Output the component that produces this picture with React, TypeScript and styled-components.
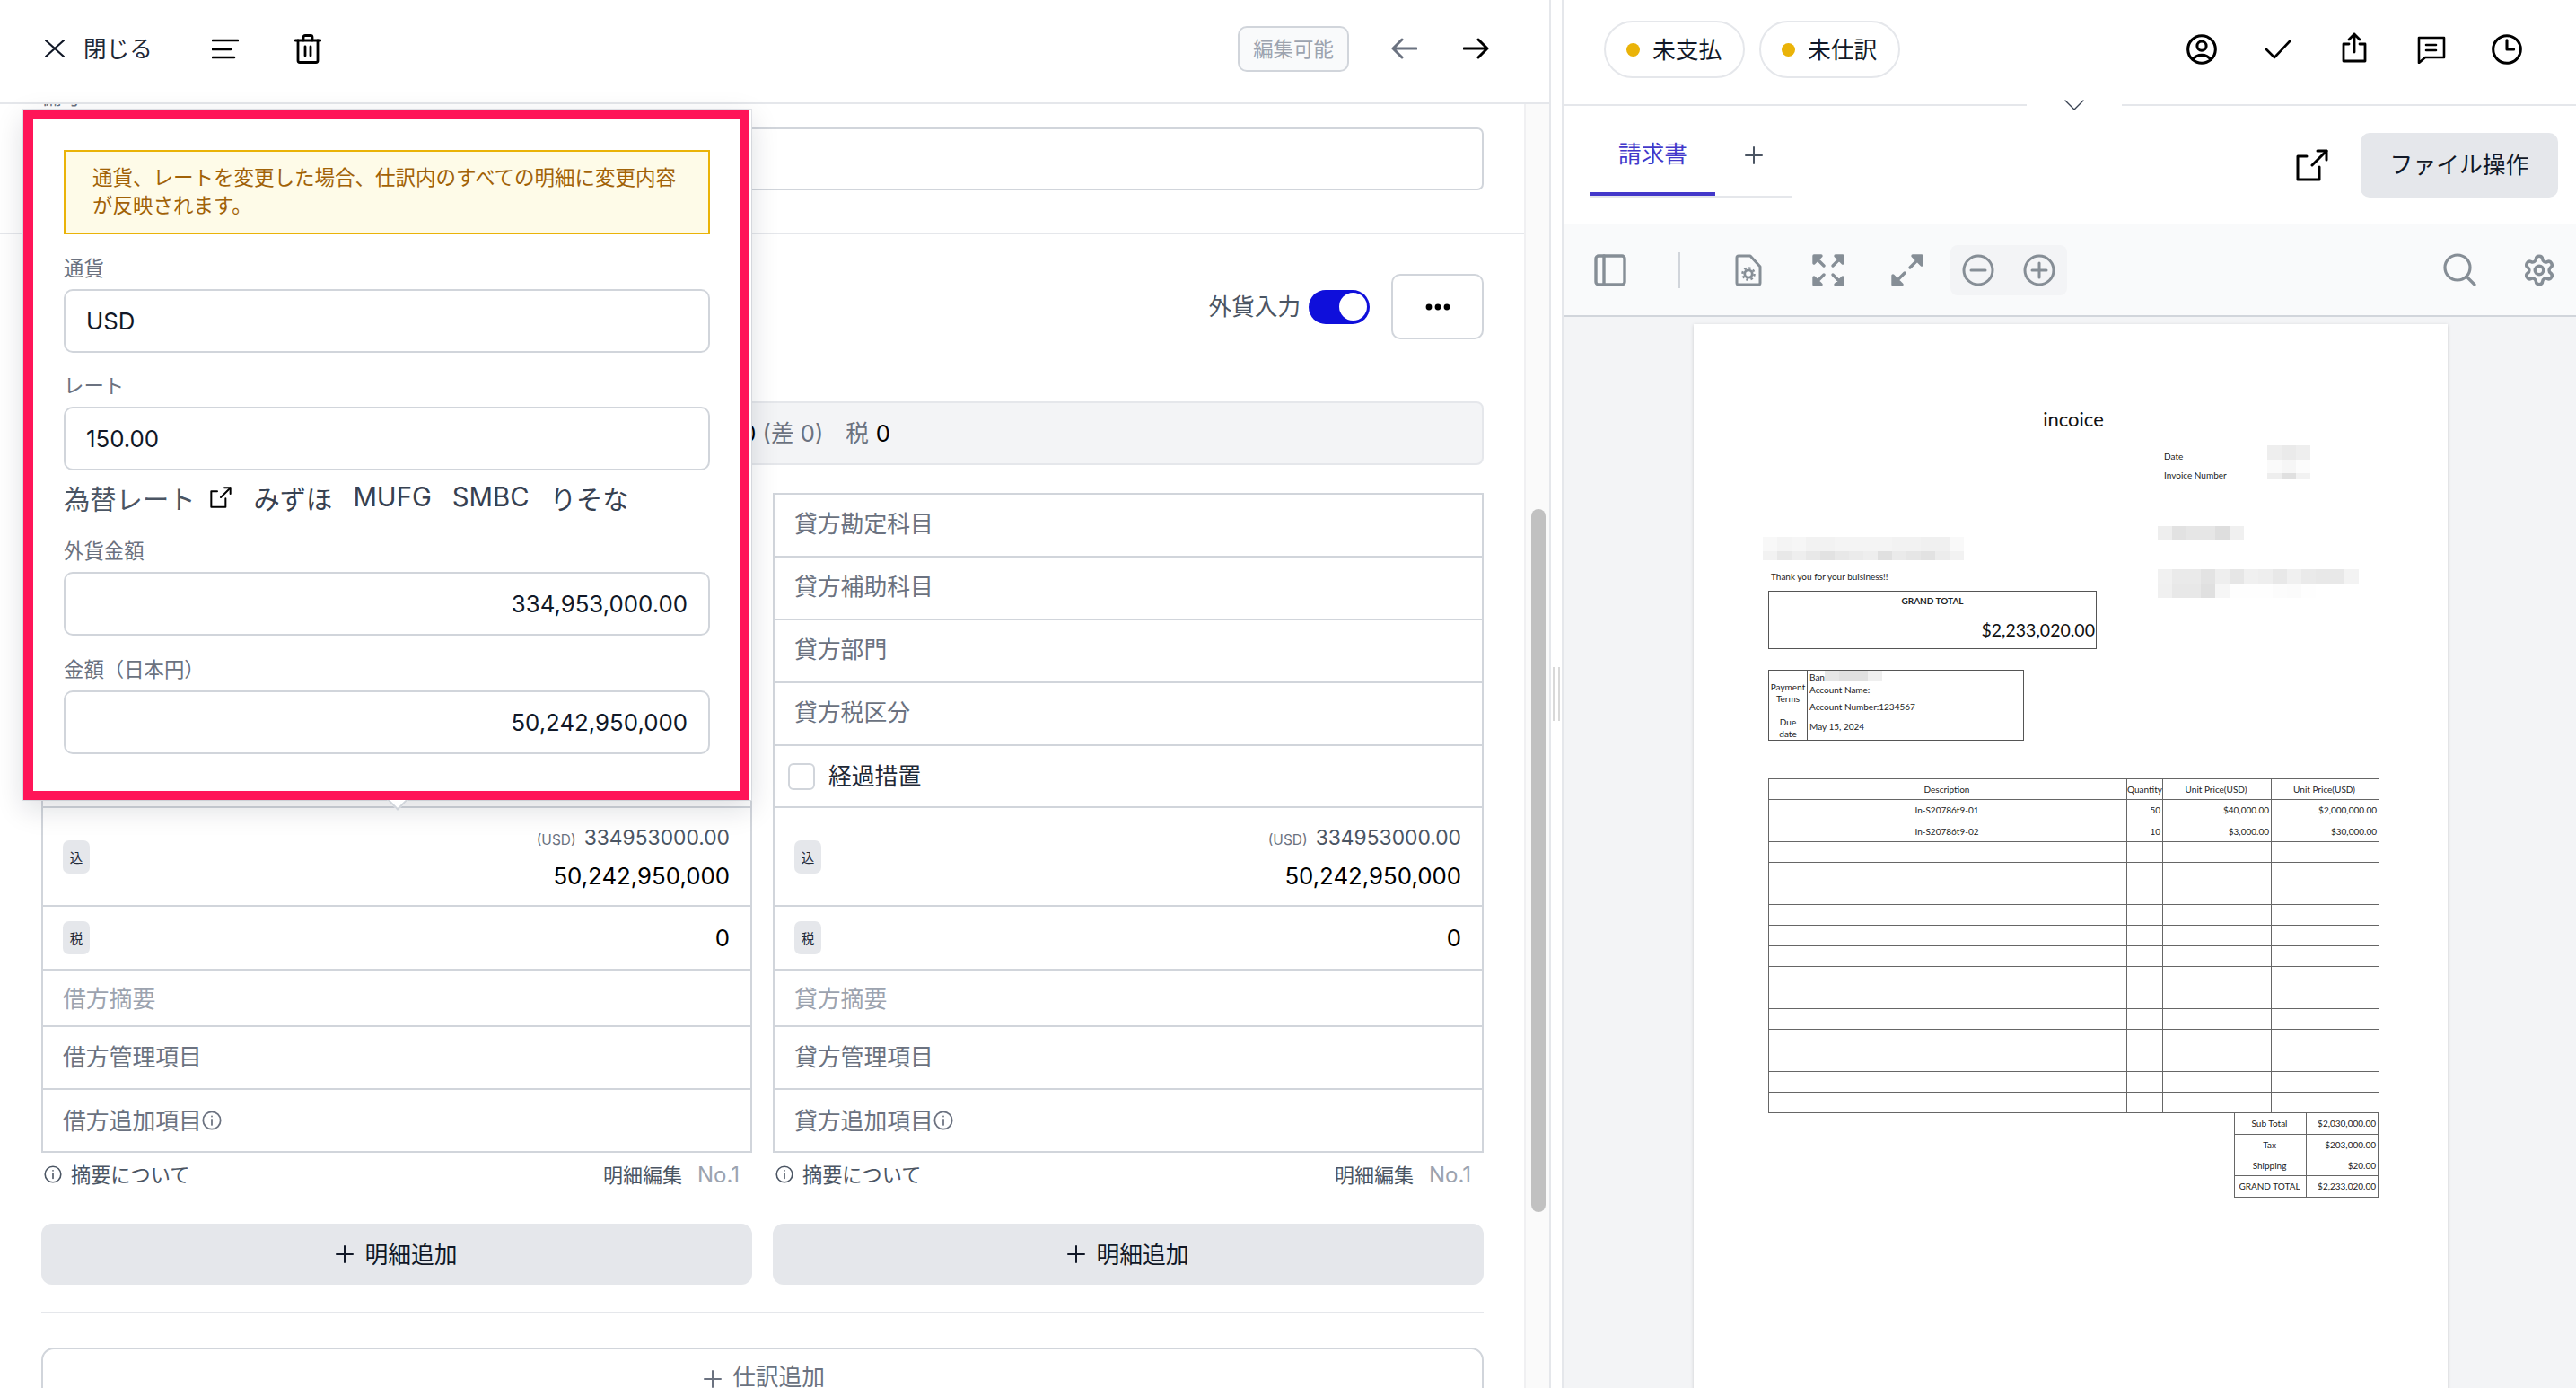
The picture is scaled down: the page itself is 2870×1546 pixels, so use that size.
import React from "react";
import styled, { createGlobalStyle } from "styled-components";
import { Settings } from "lucide-react";

const GlobalStyle = createGlobalStyle`
  html, body {
    margin: 0;
    padding: 0;
    background: #fff;
    overflow: hidden;
    font-family: Inter, "Noto Sans CJK JP", sans-serif;
    color: #111827;
  }
  * { box-sizing: border-box; }
`;

const Page = styled.div`
  display: flex;
  width: 2870px;
  height: 1546px;
  overflow: hidden;
`;

const Cjk = styled.span<{ $lift?: number }>`
  margin-bottom: ${(p) => p.$lift ?? 7}px;
`;

/* ---------- left panel ---------- */

const LeftPanel = styled.div`
  position: relative;
  display: flex;
  flex-direction: column;
  width: 1728px;
  height: 100%;
  border-right: 2px solid #e5e7eb;
`;

const Header = styled.header`
  display: flex;
  align-items: center;
  flex: none;
  height: 116px;
  padding: 0 67px 6px 50px;
  border-bottom: 2px solid #e5e7eb;
`;

const CloseText = styled.span`
  margin: 0 66px 4px 21px;
  font-size: 25.6px;
  color: #1f2937;
`;

const HeaderSpacer = styled.div`
  flex: 1;
`;

const EditBadge = styled.div`
  display: flex;
  align-items: center;
  justify-content: center;
  width: 124px;
  height: 51px;
  margin-right: 47px;
  background: #f9fafb;
  border: 2px solid #d1d5db;
  border-radius: 10px;
  font-size: 22.4px;
  color: #9ca3af;
`;

const Line = styled.svg<{ $color?: string; $sw?: number }>`
  flex: none;
  fill: none;
  stroke: ${(p) => p.$color ?? "#000"};
  stroke-width: ${(p) => p.$sw ?? 2.8};
  stroke-linecap: round;
  stroke-linejoin: round;
`;

const TrashIcon = styled(Line)`
  margin-left: 62px;
`;

const NextArrow = styled(Line)`
  margin-left: 51px;
`;

const ShareIcon = styled(Line)`
  margin-bottom: 5px;
`;

const Body = styled.div`
  display: flex;
  flex: 1;
  min-height: 0;
`;

const Scroller = styled.div`
  flex: 1;
  min-width: 0;
  overflow: hidden;
`;

const ScrollInner = styled.div`
  margin-top: -30px;
`;

const ScrollTrack = styled.div`
  flex: none;
  width: 28px;
  padding: 451px 4px 0 6px;
  background: #fafafa;
  border-left: 2px solid #f0f0f2;
`;

const ScrollThumb = styled.div`
  width: 16px;
  height: 783px;
  background: #c1c1c1;
  border-radius: 8px;
`;

const TopSection = styled.section`
  padding: 7px 45px 47px 46px;
  border-bottom: 2px solid #e5e7eb;
`;

const FieldLabel = styled.div`
  height: 30px;
  margin-bottom: 19px;
  font-size: 22.4px;
  line-height: 30px;
  color: #6b7280;
`;

const BlankInput = styled.div`
  height: 70px;
  border: 2px solid #d1d5db;
  border-radius: 7px;
`;

const JournalSection = styled.section`
  padding: 44px 45px 0 46px;
`;

const ToggleRow = styled.div`
  display: flex;
  align-items: center;
  justify-content: flex-end;
  height: 73px;
`;

const ToggleLabel = styled.span`
  margin-bottom: 4px;
  font-size: 25.6px;
  color: #4b5563;
`;

const Toggle = styled.div`
  display: flex;
  justify-content: flex-end;
  width: 68px;
  height: 38px;
  margin: 0 24px 0 9px;
  padding: 3.5px;
  background: #0f0fdb;
  border-radius: 19px;
`;

const ToggleKnob = styled.div`
  width: 31px;
  height: 31px;
  background: #fff;
  border-radius: 50%;
`;

const MoreButton = styled.div`
  display: flex;
  align-items: center;
  justify-content: center;
  width: 103px;
  height: 73px;
  border: 2px solid #d1d5db;
  border-radius: 10px;
`;

const SummaryBar = styled.div`
  display: flex;
  align-items: center;
  justify-content: flex-end;
  gap: 25px;
  height: 71px;
  margin: 69px 0 31px;
  padding: 0 659px 4px 0;
  background: #f3f4f6;
  border: 2px solid #e5e7eb;
  border-radius: 8px;
  font-size: 25.6px;
  white-space: nowrap;
  color: #6b7280;
`;

const SummaryValue = styled.b`
  margin-left: 8px;
  font-weight: 400;
  color: #000;
`;

const Columns = styled.div`
  display: grid;
  grid-template-columns: 792px 792px;
  gap: 23px;
`;

const LedgerTable = styled.div`
  border: 2px solid #d1d5db;
`;

const LedgerRow = styled.div<{ $h: number; $tone?: string }>`
  display: flex;
  align-items: center;
  justify-content: space-between;
  height: ${(p) => p.$h}px;
  padding: 0 23px 0 22px;
  border-bottom: 2px solid #d1d5db;
  font-size: 25.8px;
  color: ${(p) => p.$tone ?? "#6b7280"};

  &:last-child {
    border-bottom: 0;
  }
`;

const CheckBox = styled.span`
  width: 30px;
  height: 30px;
  margin: 0 15px 0 -7px;
  border: 2px solid #d1d5db;
  border-radius: 6px;
`;

const CheckLabel = styled.label`
  display: flex;
  align-items: center;
  color: #1f2937;
`;

const Tag = styled.span`
  display: flex;
  align-items: center;
  justify-content: center;
  width: 30px;
  height: 37px;
  background: #e5e7eb;
  border-radius: 7px;
  font-size: 14.6px;
  color: #1f2937;
`;

const AmountBlock = styled.div`
  text-align: right;
  line-height: 40px;
`;

const ForeignAmount = styled.div`
  font-size: 22.8px;
  color: #4b5563;
`;

const Currency = styled.span`
  margin-right: 9px;
  font-size: 15.5px;
  color: #6b7280;
`;

const YenAmount = styled.div`
  color: #000;
`;

const InlineHelp = styled.span`
  display: inline-flex;
  align-items: center;
`;

const ColumnFooter = styled.div`
  display: flex;
  align-items: center;
  justify-content: space-between;
  height: 52px;
  padding: 0 14px 4px 3px;
  font-size: 22px;
  color: #4b5563;
`;

const FooterNo = styled.span`
  margin-left: 17px;
  font-size: 24px;
  color: #9ca3af;
`;

const FooterNote = styled.span`
  margin: 0 0 2px 10px;
  font-size: 22.2px;
`;

const FooterEdit = styled.span`
  margin-bottom: 2px;
`;

const AddLineButton = styled.div`
  display: flex;
  align-items: center;
  justify-content: center;
  gap: 12px;
  height: 68px;
  margin-top: 27px;
  background: #e5e7eb;
  border-radius: 12px;
  font-size: 25.8px;
  color: #111827;
`;

const SectionRule = styled.hr`
  height: 2px;
  margin: 30px 0 38px;
  background: #e5e7eb;
  border: 0;
`;

const AddJournal = styled.div`
  display: flex;
  align-items: flex-start;
  justify-content: center;
  gap: 12px;
  height: 110px;
  padding: 15px 0 0 4px;
  border: 2px solid #d1d5db;
  border-radius: 14px;
  font-size: 25.8px;
  line-height: 32px;
  color: #6b7280;
`;

const PlusGlyph = styled(Line)`
  margin-top: 8px;
`;

/* ---------- popover ---------- */

const Popover = styled.div`
  position: absolute;
  top: 122px;
  left: 26px;
  width: 811px;
  height: 769px;
  background: #fff;
  box-shadow: 0 10px 30px rgba(17, 24, 39, 0.14), 0 0 0 1px #e5e7eb;
  z-index: 5;

  &::after {
    content: "";
    position: absolute;
    left: 408px;
    bottom: -8px;
    width: 16px;
    height: 16px;
    background: #fff;
    border-right: 2px solid #d1d5db;
    border-bottom: 2px solid #d1d5db;
    transform: rotate(45deg);
  }
`;

const PopoverFrame = styled.div`
  position: relative;
  z-index: 1;
  width: 808px;
  height: 100%;
  padding: 34px 33px 0 34px;
  background: #fff;
  border: solid #ff1558;
  border-width: 11px 10px 10px 11px;
`;

const Notice = styled.div`
  height: 94px;
  padding: 13px 30px;
  background: #fefbe8;
  border: 2px solid #eab308;
  font-size: 22.5px;
  line-height: 31px;
  color: #a16207;
`;

const PopField = styled.div<{ $top: number }>`
  margin-top: ${(p) => p.$top}px;
`;

const PopLabel = styled.div`
  height: 30px;
  margin-bottom: 8px;
  font-size: 22.4px;
  line-height: 30px;
  color: #6b7280;
`;

const PopInput = styled.div<{ $right?: boolean }>`
  display: flex;
  align-items: center;
  justify-content: ${(p) => (p.$right ? "flex-end" : "flex-start")};
  height: 71px;
  padding: 0 23px;
  border: 2px solid #d1d5db;
  border-radius: 10px;
  font-size: 25.8px;
  color: #111827;
`;

const RateLinks = styled.div`
  display: flex;
  align-items: center;
  height: 36px;
  margin-top: 13px;
  padding-bottom: 3px;
  font-size: 29.3px;
  color: #374151;
`;

const RateTitle = styled.span`
  margin-right: 17px;
  color: #4b5563;
`;

const RateBank = styled.span`
  margin-left: 23px;
`;

const FirstBank = styled(RateBank)`
  margin-left: 24px;
`;

/* ---------- gutter ---------- */

const Gutter = styled.div`
  display: flex;
  justify-content: center;
  gap: 4px;
  flex: none;
  width: 14px;
  padding-top: 743px;
  border-right: 2px solid #e5e7eb;
`;

const GripLine = styled.div`
  width: 2px;
  height: 60px;
  background: #d9d9d9;
`;

/* ---------- right panel ---------- */

const RightPanel = styled.div`
  display: flex;
  flex-direction: column;
  flex: 1;
  min-width: 0;
`;

const StatusBar = styled.div`
  display: flex;
  align-items: center;
  flex: none;
  height: 116px;
  padding: 0 59px 6px 45px;
`;

const StatusPill = styled.div`
  display: flex;
  align-items: center;
  gap: 14px;
  width: 157px;
  height: 64px;
  margin-right: 16px;
  padding-left: 23px;
  border: 2px solid #e5e7eb;
  border-radius: 32px;
  font-size: 25.8px;
  color: #111827;
`;

const StatusDot = styled.span`
  width: 15px;
  height: 15px;
  background: #eab308;
  border-radius: 50%;
`;

const StatusIcons = styled.div`
  display: flex;
  align-items: center;
  gap: 49px;
  margin-left: auto;
`;

const StatusIcon = styled.div`
  display: flex;
  align-items: center;
  justify-content: center;
  width: 36px;
  height: 36px;
`;

const CollapseRule = styled.div`
  display: flex;
  align-items: center;
  flex: none;
  height: 2px;
`;

const RuleLeft = styled.div`
  width: 516px;
  height: 2px;
  background: #e5e7eb;
`;

const RuleGap = styled.div`
  display: flex;
  justify-content: center;
  width: 106px;
`;

const RuleRight = styled.div`
  flex: 1;
  height: 2px;
  background: #e5e7eb;
`;

const TabBar = styled.div`
  display: flex;
  align-items: flex-start;
  flex: none;
  height: 132px;
  padding: 30px 20px 0 30px;
`;

const Tabs = styled.div`
  display: flex;
  width: 225px;
  height: 70px;
  margin-top: 2px;
  border-bottom: 2px solid #e5e7eb;
`;

const ActiveTab = styled.div`
  width: 139px;
  height: 68px;
  border-bottom: 4px solid #4338ca;
  font-size: 25.6px;
  line-height: 43px;
  text-align: center;
  color: #4338ca;
`;

const AddTab = styled.div`
  display: flex;
  justify-content: center;
  width: 86px;
  padding-top: 13px;
`;

const ExternalSlot = styled.div`
  display: flex;
  align-items: center;
  height: 72px;
  margin: 0 36px 0 auto;
`;

const FileButton = styled.div`
  display: flex;
  align-items: center;
  justify-content: center;
  width: 220px;
  height: 72px;
  background: #e5e7eb;
  border-radius: 10px;
  font-size: 25.8px;
  color: #111827;
`;

const PdfToolbar = styled.div`
  display: flex;
  align-items: center;
  flex: none;
  height: 103px;
  padding: 0 22px 0 34px;
  background: #f9fafb;
  border-bottom: 2px solid #d1d5db;
`;

const ToolSeparator = styled.div`
  width: 2px;
  height: 40px;
  margin: 0 59px 0 58px;
  background: #d1d5db;
`;

const ToolGroup = styled.div`
  display: flex;
  align-items: center;
  gap: 52px;
`;

const ZoomGroup = styled.div`
  display: flex;
  align-items: center;
  gap: 32px;
  height: 56px;
  margin-left: 30px;
  padding: 0 13px;
  background: #f3f4f6;
  border-radius: 8px;
`;

const ToolRight = styled.div`
  display: flex;
  align-items: center;
  gap: 51px;
  margin-left: auto;
`;

const Viewer = styled.div`
  display: flex;
  justify-content: center;
  flex: 1;
  min-height: 0;
  padding: 8px 0 0 2px;
  background: #f3f4f6;
`;

/* ---------- invoice ---------- */

const InvoiceSheet = styled.div`
  width: 840px;
  height: 1300px;
  padding: 90px 0 0 83px;
  background: #fff;
  box-shadow: 0 1px 4px rgba(0, 0, 0, 0.16);
  font-family: Lato, "Liberation Sans", sans-serif;
  font-size: 10px;
  color: #222;
`;

const InvoiceBody = styled.div`
  width: 680px;
`;

const InvoiceTitle = styled.div`
  font-size: 22px;
  line-height: 32px;
  text-align: center;
  color: #111;
`;

const InvoiceTop = styled.div`
  display: grid;
  grid-template-columns: 434px 246px;
`;

const InvoiceLeft = styled.div`
  padding-top: 115px;
`;

const InvoiceRight = styled.div`
  padding-top: 13px;
`;

const Mosaic = styled.div<{ $cols: number; $cw: number; $rows: string; $shift?: number; $top?: number }>`
  display: grid;
  grid-template-columns: repeat(${(p) => p.$cols}, ${(p) => p.$cw}px);
  grid-template-rows: ${(p) => p.$rows};
  width: max-content;
  margin-left: ${(p) => p.$shift ?? 0}px;
  margin-top: ${(p) => p.$top ?? 0}px;
`;

const MosaicCell = styled.div<{ $shade: string }>`
  background: #${(p) => p.$shade};
`;

const ThankYou = styled.div`
  height: 16px;
  margin: 10px 0 8px 3px;
  line-height: 16px;
`;

const GrandBox = styled.div`
  width: 366px;
  height: 65px;
  border: 1.5px solid #555;
`;

const GrandHead = styled.div`
  height: 22px;
  border-bottom: 1.5px solid #888;
  font-weight: 700;
  line-height: 20px;
  text-align: center;
`;

const GrandValue = styled.div`
  height: 41px;
  padding-right: 1px;
  font-size: 19.5px;
  line-height: 41px;
  text-align: right;
  color: #111;
`;

const TermsGrid = styled.div`
  display: grid;
  grid-template-columns: 43px 1fr;
  grid-template-rows: 51px 26px;
  width: 285px;
  margin-top: 23px;
  border: 1.5px solid #555;
`;

const TermsHead = styled.div<{ $last?: boolean }>`
  display: flex;
  align-items: center;
  justify-content: center;
  line-height: 13px;
  text-align: center;
  border-right: 1px solid #555;
  border-bottom: ${(p) => (p.$last ? "0" : "1.5px solid #777")};
`;

const TermsBody = styled.div<{ $last?: boolean }>`
  padding-left: 2px;
  line-height: 15px;
  border-bottom: ${(p) => (p.$last ? "0" : "1.5px solid #777")};
`;

const BankLine = styled.div`
  display: flex;
  height: 14px;
`;

const TermsGap = styled.div`
  height: 4px;
`;

const DateBlock = styled.div`
  display: flex;
`;

const DateLabels = styled.div`
  width: 122px;
  height: 38px;
  padding: 2px 0 0 7px;
  line-height: 21px;
`;

const InvoiceTable = styled.table`
  width: 680px;
  margin-top: 42px;
  border-collapse: collapse;
  table-layout: fixed;
`;

const InvoiceCell = styled.td<{ $align?: string }>`
  height: 23.25px;
  padding: 0 2px 0 0;
  border: 1.2px solid #666;
  line-height: 10px;
  text-align: ${(p) => p.$align ?? "right"};
`;

const TotalsTable = styled.table`
  width: 161px;
  margin-left: 519px;
  border-collapse: collapse;
  table-layout: fixed;
`;

const TotalsCell = styled.td<{ $align?: string }>`
  height: 23.25px;
  padding: 0 2px 0 0;
  border: 1.2px solid #666;
  border-top: 0;
  line-height: 10px;
  text-align: ${(p) => p.$align ?? "right"};
`;

/* ---------- icons ---------- */

const InfoIcon = ({ size, color }: { size: number; color: string }) => (
  <Line width={size} height={size} viewBox="0 0 20 20" $color={color} $sw={1.6}>
    <circle cx="10" cy="10" r="8.8" />
    <path d="M10 9v5.5" />
    <path d="M10 5.8v.2" />
  </Line>
);

const ExternalIcon = ({ size }: { size: number }) => (
  <Line width={size} height={size} viewBox="0 0 36 36" $sw={3}>
    <path d="M12 8H2v26h24V20" />
    <path d="M18 18 34 2" />
    <path d="M24 2h10v10" />
  </Line>
);

const PlusIcon = ({ color }: { color: string }) => (
  <Line width="20" height="20" viewBox="0 0 20 20" $sw={2} $color={color}>
    <path d="M10 1v18M1 10h18" />
  </Line>
);

const tool = "#868e96";

const invoiceRows = [
  ["In-S20786t9-01", "50", "$40,000.00", "$2,000,000.00"],
  ["In-S20786t9-02", "10", "$3,000.00", "$30,000.00"],
  ...Array.from({ length: 13 }, () => ["", "", "", ""]),
];

const totals = [
  ["Sub Total", "$2,030,000.00"],
  ["Tax", "$203,000.00"],
  ["Shipping", "$20.00"],
  ["GRAND TOTAL", "$2,233,020.00"],
];

const cells = (shades: string[]) =>
  shades.map((s, i) => <MosaicCell key={i} $shade={s} />);

// the top rows of the debit column sit under the popover, so they carry no text here
function LedgerColumn({ side, covered }: { side: string; covered?: boolean }) {
  return (
    <div>
      <LedgerTable>
        <LedgerRow $h={70}>{!covered && <Cjk>{side}勘定科目</Cjk>}</LedgerRow>
        <LedgerRow $h={70}>{!covered && <Cjk>{side}補助科目</Cjk>}</LedgerRow>
        <LedgerRow $h={70}>{!covered && <Cjk>{side}部門</Cjk>}</LedgerRow>
        <LedgerRow $h={70}>{!covered && <Cjk>{side}税区分</Cjk>}</LedgerRow>
        <LedgerRow $h={69}>
          {!covered && (
            <CheckLabel>
              <CheckBox />
              <Cjk $lift={4}>経過措置</Cjk>
            </CheckLabel>
          )}
        </LedgerRow>
        <LedgerRow $h={110}>
          <Tag>込</Tag>
          <AmountBlock>
            <ForeignAmount>
              <Currency>(USD)</Currency>334953000.00
            </ForeignAmount>
            <YenAmount>50,242,950,000</YenAmount>
          </AmountBlock>
        </LedgerRow>
        <LedgerRow $h={71}>
          <Tag>税</Tag>
          <YenAmount>0</YenAmount>
        </LedgerRow>
        <LedgerRow $h={63} $tone="#9ca3af">
          <Cjk $lift={3}>{side}摘要</Cjk>
        </LedgerRow>
        <LedgerRow $h={70}>
          <Cjk $lift={5}>{side}管理項目</Cjk>
        </LedgerRow>
        <LedgerRow $h={68}>
          <InlineHelp>
            <Cjk $lift={3}>{side}追加項目</Cjk>
            <InfoIcon size={22} color="#6b7280" />
          </InlineHelp>
        </LedgerRow>
      </LedgerTable>
      <ColumnFooter>
        <InlineHelp>
          <InfoIcon size={20} color="#4b5563" />
          <FooterNote>摘要について</FooterNote>
        </InlineHelp>
        <FooterEdit>
          明細編集<FooterNo>No.1</FooterNo>
        </FooterEdit>
      </ColumnFooter>
      <AddLineButton>
        <PlusIcon color="#111827" />
        <Cjk $lift={4}>明細追加</Cjk>
      </AddLineButton>
    </div>
  );
}

export default function App() {
  return (
    <Page>
      <GlobalStyle />
      <LeftPanel>
        <Header>
          <Line width="22" height="20" viewBox="0 0 22 20" $sw={2.2} $color="#111827">
            <path d="M1 1 21 19M21 1 1 19" />
          </Line>
          <CloseText>閉じる</CloseText>
          <Line width="30" height="23" viewBox="0 0 30 23" $sw={2.6}>
            <path d="M1 2h28M1 12h20M1 21h24" />
          </Line>
          <TrashIcon width="30" height="33" viewBox="0 0 30 33" $sw={2.8}>
            <path d="M1 7h28" />
            <path d="M10 7V3.5A2 2 0 0 1 12 1.5h6a2 2 0 0 1 2 2V7" />
            <path d="M4 7v22.5a2 2 0 0 0 2 2h18a2 2 0 0 0 2-2V7" />
            <path d="M12 14v10M18 14v10" />
          </TrashIcon>
          <HeaderSpacer />
          <EditBadge>
            <Cjk $lift={3}>編集可能</Cjk>
          </EditBadge>
          <Line width="29" height="24" viewBox="0 0 29 24" $sw={3} $color="#6b7280">
            <path d="M28 12H2M12 2 2 12l10 10" />
          </Line>
          <NextArrow width="29" height="24" viewBox="0 0 29 24" $sw={3}>
            <path d="M1 12h26M17 2l10 10-10 10" />
          </NextArrow>
        </Header>
        <Body>
          <Scroller>
            <ScrollInner>
              <TopSection>
                <FieldLabel>備考</FieldLabel>
                <BlankInput />
              </TopSection>
              <JournalSection>
                <ToggleRow>
                  <ToggleLabel>外貨入力</ToggleLabel>
                  <Toggle>
                    <ToggleKnob />
                  </Toggle>
                  <MoreButton>
                    <svg width="28" height="8" viewBox="0 0 28 8">
                      <circle cx="4" cy="4" r="3.4" />
                      <circle cx="14" cy="4" r="3.4" />
                      <circle cx="24" cy="4" r="3.4" />
                    </svg>
                  </MoreButton>
                </ToggleRow>
                <SummaryBar>
                  <span>
                    <SummaryValue>0</SummaryValue> (差 0)
                  </span>
                  <span>
                    税<SummaryValue>0</SummaryValue>
                  </span>
                </SummaryBar>
                <Columns>
                  <LedgerColumn side="借方" covered />
                  <LedgerColumn side="貸方" />
                </Columns>
                <SectionRule />
                <AddJournal>
                  <PlusGlyph width="20" height="20" viewBox="0 0 20 20" $sw={2} $color="#6b7280">
                    <path d="M10 1v18M1 10h18" />
                  </PlusGlyph>
                  仕訳追加
                </AddJournal>
              </JournalSection>
            </ScrollInner>
          </Scroller>
          <ScrollTrack>
            <ScrollThumb />
          </ScrollTrack>
        </Body>
        <Popover>
          <PopoverFrame>
            <Notice>通貨、レートを変更した場合、仕訳内のすべての明細に変更内容が反映されます。</Notice>
            <PopField $top={23}>
              <PopLabel>通貨</PopLabel>
              <PopInput>USD</PopInput>
            </PopField>
            <PopField $top={22}>
              <PopLabel>レート</PopLabel>
              <PopInput>150.00</PopInput>
            </PopField>
            <RateLinks>
              <RateTitle>為替レート</RateTitle>
              <ExternalIcon size={24} />
              <FirstBank>みずほ</FirstBank>
              <RateBank>MUFG</RateBank>
              <RateBank>SMBC</RateBank>
              <RateBank>りそな</RateBank>
            </RateLinks>
            <PopField $top={26}>
              <PopLabel>外貨金額</PopLabel>
              <PopInput $right>334,953,000.00</PopInput>
            </PopField>
            <PopField $top={23}>
              <PopLabel>金額（日本円）</PopLabel>
              <PopInput $right>50,242,950,000</PopInput>
            </PopField>
          </PopoverFrame>
        </Popover>
      </LeftPanel>

      <Gutter>
        <GripLine />
        <GripLine />
      </Gutter>

      <RightPanel>
        <StatusBar>
          <StatusPill>
            <StatusDot />
            <Cjk $lift={4}>未支払</Cjk>
          </StatusPill>
          <StatusPill>
            <StatusDot />
            <Cjk $lift={4}>未仕訳</Cjk>
          </StatusPill>
          <StatusIcons>
            <StatusIcon>
              <Line width="34" height="34" viewBox="2 2 20 20" $sw={1.8}>
                <path d="M17.982 18.725A7.488 7.488 0 0 0 12 15.75a7.488 7.488 0 0 0-5.982 2.975m11.963 0a9 9 0 1 0-11.963 0m11.963 0A8.966 8.966 0 0 1 12 21a8.966 8.966 0 0 1-5.982-2.275M15 9.75a3 3 0 1 1-6 0 3 3 0 0 1 6 0Z" />
              </Line>
            </StatusIcon>
            <StatusIcon>
              <Line width="28" height="21" viewBox="0 0 28 21" $sw={2.6}>
                <path d="M1 10l9 9L27 1" />
              </Line>
            </StatusIcon>
            <StatusIcon>
              <ShareIcon width="28" height="34" viewBox="0 0 28 34" $sw={2.8}>
                <path d="M14 22V2M8 8l6-6 6 6" />
                <path d="M8 13H2v19h24V13h-6" />
              </ShareIcon>
            </StatusIcon>
            <StatusIcon>
              <Line width="33" height="31" viewBox="0 0 33 31" $sw={2.6}>
                <path d="M3 2h28v22H10l-7 6V2Z" />
                <path d="M11 10h11M11 16h11" />
              </Line>
            </StatusIcon>
            <StatusIcon>
              <Line width="34" height="34" viewBox="2 2 20 20" $sw={1.8}>
                <path d="M12 6v6h4.5m4.5 0a9 9 0 1 1-18 0 9 9 0 0 1 18 0Z" />
              </Line>
            </StatusIcon>
          </StatusIcons>
        </StatusBar>
        <CollapseRule>
          <RuleLeft />
          <RuleGap>
            <Line width="22" height="12" viewBox="0 0 22 12" $sw={1.4} $color="#374151">
              <path d="M1 1l10 10L21 1" />
            </Line>
          </RuleGap>
          <RuleRight />
        </CollapseRule>
        <TabBar>
          <Tabs>
            <ActiveTab>請求書</ActiveTab>
            <AddTab>
              <PlusIcon color="#4b5563" />
            </AddTab>
          </Tabs>
          <ExternalSlot>
            <ExternalIcon size={36} />
          </ExternalSlot>
          <FileButton>
            <Cjk $lift={5}>ファイル操作</Cjk>
          </FileButton>
        </TabBar>
        <PdfToolbar>
          <Line width="36" height="36" viewBox="0 0 36 36" $color={tool} $sw={3.4}>
            <rect x="2" y="2" width="32" height="32" rx="3" />
            <path d="M11 2v32" />
          </Line>
          <ToolSeparator />
          <ToolGroup>
            <Line width="36" height="36" viewBox="0 0 36 36" $color={tool} $sw={3}>
              <path d="M6 2h13l11 12v18a2 2 0 0 1-2 2H6a2 2 0 0 1-2-2V4a2 2 0 0 1 2-2Z" />
              <circle cx="17" cy="22" r="4.2" strokeWidth="2.8" />
              <circle cx="17" cy="22" r="6.6" strokeWidth="2.4" strokeDasharray="2.6 2.58" strokeLinecap="butt" />
            </Line>
            <Line width="36" height="36" viewBox="0 0 36 36" $color={tool} $sw={3.4}>
              <path d="M2 2h8L2 10ZM5 5l8 8" fill={tool} />
              <path d="M34 2h-8l8 8ZM31 5l-8 8" fill={tool} />
              <path d="M2 34h8l-8-8ZM5 31l8-8" fill={tool} />
              <path d="M34 34h-8l8-8ZM31 31l-8-8" fill={tool} />
            </Line>
            <Line width="36" height="36" viewBox="0 0 36 36" $color={tool} $sw={3.4}>
              <path d="M34 2H24l10 10ZM30 6l-9 9" fill={tool} />
              <path d="M2 34h10L2 24ZM6 30l9-9" fill={tool} />
            </Line>
          </ToolGroup>
          <ZoomGroup>
            <Line width="36" height="36" viewBox="0 0 36 36" $color={tool} $sw={3}>
              <circle cx="18" cy="18" r="16" />
              <path d="M10 18h16" />
            </Line>
            <Line width="36" height="36" viewBox="0 0 36 36" $color={tool} $sw={3}>
              <circle cx="18" cy="18" r="16" />
              <path d="M10 18h16M18 10v16" />
            </Line>
          </ZoomGroup>
          <ToolRight>
            <Line width="37" height="37" viewBox="0 0 37 37" $color={tool} $sw={3.2}>
              <circle cx="16" cy="16" r="14" />
              <path d="M26 26l9 9" />
            </Line>
            <Settings size={38} color={tool} strokeWidth={2.2} />
          </ToolRight>
        </PdfToolbar>
        <Viewer>
          <InvoiceSheet>
            <InvoiceBody>
              <InvoiceTitle>incoice</InvoiceTitle>
              <InvoiceTop>
                <InvoiceLeft>
                  <Mosaic $cols={14} $cw={16} $rows="16px 10px" $shift={-6}>
                    {cells([
                      "f8f8f8", "f4f4f4", "f6f6f6", "f2f2f2", "f2f2f2", "f4f4f4", "f4f4f4",
                      "f4f4f4", "f4f4f4", "f2f2f2", "f2f2f2", "f0f0f0", "f0f0f0", "f9f9f9",
                      "f2f2f2", "e8e8e8", "eeeeee", "e8e8e8", "e2e2e2", "e8e8e8", "ebebeb",
                      "eeeeee", "e0e0e0", "eaeaea", "e6e6e6", "e2e2e2", "ececec", "f2f2f2",
                    ])}
                  </Mosaic>
                  <ThankYou>Thank you for your buisiness!!</ThankYou>
                  <GrandBox>
                    <GrandHead>GRAND TOTAL</GrandHead>
                    <GrandValue>$2,233,020.00</GrandValue>
                  </GrandBox>
                  <TermsGrid>
                    <TermsHead>
                      Payment
                      <br />
                      Terms
                    </TermsHead>
                    <TermsBody>
                      <BankLine>
                        Ban
                        <Mosaic $cols={4} $cw={16} $rows="12px">
                          {cells(["e6e6e6", "e0e0e0", "e0e0e0", "efefef"])}
                        </Mosaic>
                      </BankLine>
                      Account Name:
                      <TermsGap />
                      Account Number:1234567
                    </TermsBody>
                    <TermsHead $last>
                      Due
                      <br />
                      date
                    </TermsHead>
                    <TermsBody $last>
                      <TermsGap />
                      May 15, 2024
                    </TermsBody>
                  </TermsGrid>
                </InvoiceLeft>
                <InvoiceRight>
                  <DateBlock>
                    <DateLabels>
                      Date
                      <br />
                      Invoice Number
                    </DateLabels>
                    <Mosaic $cols={3} $cw={16} $rows="16px 15px 7px">
                      {cells([
                        "eeeeee", "eaeaea", "eeeeee",
                        "fafafa", "f6f6f6", "fcfcfc",
                        "eeeeee", "e0e0e0", "f2f2f2",
                      ])}
                    </Mosaic>
                  </DateBlock>
                  <Mosaic $cols={6} $cw={16} $rows="16px" $top={52}>
                    {cells(["eeeeee", "e2e2e2", "e6e6e6", "e6e6e6", "dedede", "f0f0f0"])}
                  </Mosaic>
                  <Mosaic $cols={14} $cw={16} $rows="16px 16px" $top={32}>
                    {cells([
                      "f1f1f1", "eaeaea", "eaeaea", "e3e3e3", "eeeeee", "e6e6e6", "f0f0f0",
                      "eeeeee", "e8e8e8", "f0f0f0", "eaeaea", "e8e8e8", "e8e8e8", "f3f3f3",
                      "f0f0f0", "e8e8e8", "e8e8e8", "e0e0e0", "f6f6f6", "fefefe", "fefefe",
                      "fefefe", "fcfcfc", "fbfbfb", "fefefe", "ffffff", "ffffff", "ffffff",
                    ])}
                  </Mosaic>
                </InvoiceRight>
              </InvoiceTop>
              <InvoiceTable>
                <colgroup>
                  <col width="399" />
                  <col width="40" />
                  <col width="121" />
                  <col width="120" />
                </colgroup>
                <tbody>
                  <tr>
                    <InvoiceCell $align="center">Description</InvoiceCell>
                    <InvoiceCell $align="center">Quantity</InvoiceCell>
                    <InvoiceCell $align="center">Unit Price(USD)</InvoiceCell>
                    <InvoiceCell $align="center">Unit Price(USD)</InvoiceCell>
                  </tr>
                  {invoiceRows.map((row, i) => (
                    <tr key={i}>
                      <InvoiceCell $align="center">{row[0]}</InvoiceCell>
                      <InvoiceCell>{row[1]}</InvoiceCell>
                      <InvoiceCell>{row[2]}</InvoiceCell>
                      <InvoiceCell>{row[3]}</InvoiceCell>
                    </tr>
                  ))}
                </tbody>
              </InvoiceTable>
              <TotalsTable>
                <tbody>
                  {totals.map(([label, value]) => (
                    <tr key={label}>
                      <TotalsCell $align="center">{label}</TotalsCell>
                      <TotalsCell>{value}</TotalsCell>
                    </tr>
                  ))}
                </tbody>
              </TotalsTable>
            </InvoiceBody>
          </InvoiceSheet>
        </Viewer>
      </RightPanel>
    </Page>
  );
}
